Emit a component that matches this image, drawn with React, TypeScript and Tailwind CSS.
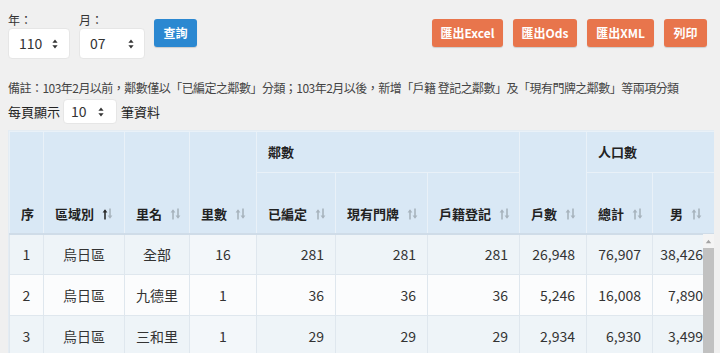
import React from "react";

const font = "font-['Noto_Sans_CJK_TC','Noto_Sans',sans-serif]";

function UpDown({ className = "" }: { className?: string }) {
  return (
    <svg width="6" height="10" viewBox="0 0 6 10" className={className}>
      <path d="M3 0.5 L5.6 3.8 L0.4 3.8 Z" fill="#333" />
      <path d="M3 9.5 L5.6 6.2 L0.4 6.2 Z" fill="#333" />
    </svg>
  );
}

function SortIcon({ active = false }: { active?: boolean }) {
  const up = active ? "#2b2b2b" : "#a7b3bd";
  const down = "#a7b3bd";
  return (
    <svg width="11" height="12" viewBox="0 0 11 12" className="ml-2 shrink-0">
      <path d="M3 2.5 L3 11.5" stroke={up} strokeWidth="1.6" />
      <path d="M0.6 4.6 L3 1.2 L5.4 4.6 Z" fill={up} />
      <path d="M8 0.5 L8 9.5" stroke={down} strokeWidth="1.6" />
      <path d="M5.6 7.4 L8 10.8 L10.4 7.4 Z" fill={down} />
    </svg>
  );
}

function FakeSelect({ value, w, h, pl, pr }: { value: string; w: string; h: string; pl: string; pr: string }) {
  return (
    <div
      className={`${w} ${h} ${pl} ${pr} flex items-center justify-between bg-white rounded-[4px] border border-[#e6e6e6] text-[14px] text-[#333]`}
    >
      <span>{value}</span>
      <UpDown />
    </div>
  );
}

const rows = [
  ["1", "烏日區", "全部", "16", "281", "281", "281", "26,948", "76,907", "38,426"],
  ["2", "烏日區", "九德里", "1", "36", "36", "36", "5,246", "16,008", "7,890"],
  ["3", "烏日區", "三和里", "1", "29", "29", "29", "2,934", "6,930", "3,499"],
];

export default function App() {
  const th = "border border-[#e9f1f8] align-bottom text-left font-bold text-[13px] text-[#222] pl-[11px] pb-[9px]";
  const td = "border border-[#dfe7ee] text-[14px] text-[#333] h-[41px]";
  return (
    <div className={`${font} bg-[#f0f0f0] w-[720px] h-[353px] overflow-hidden`}>
      <div className="pl-2 pr-[13px] pt-3 flex justify-between items-start">
        <div className="flex items-start">
          <div className="flex flex-col">
            <span className="text-[12px] leading-4 h-4 text-[#333]">年：</span>
            <FakeSelect value="110" w="w-[62px]" h="h-[31px]" pl="pl-[10px]" pr="pr-[11px]" />
          </div>
          <div className="flex flex-col ml-[9px]">
            <span className="text-[12px] leading-4 h-4 text-[#333]">月：</span>
            <FakeSelect value="07" w="w-[66px]" h="h-[31px]" pl="pl-[10px]" pr="pr-[10px]" />
          </div>
          <button className="ml-[9px] mt-[7px] w-[43px] h-[28px] rounded-[3px] bg-[#2b88d1] text-white text-[12px] font-bold shadow-[0_1px_1px_rgba(0,0,0,0.15)]">
            查詢
          </button>
        </div>
        <div className="flex items-start gap-[10px] mt-[7px]">
          {["匯出Excel", "匯出Ods", "匯出XML", "列印"].map((t, i) => (
            <button
              key={t}
              className={`${["w-[71px]", "w-[64px]", "w-[67px]", "w-[43px]"][i]} h-[28px] rounded-[3px] bg-[#e8754c] text-white text-[12px] font-bold shadow-[0_1px_1px_rgba(0,0,0,0.15)]`}
            >
              {t}
            </button>
          ))}
        </div>
      </div>

      <div className="pl-2 mt-[20px] text-[12px] leading-[18px] text-[#444] whitespace-nowrap tracking-[-0.53px]">
        備註：103年2月以前，鄰數僅以「已編定之鄰數」分類；103年2月以後，新增「戶籍 登記之鄰數」及「現有門牌之鄰數」等兩項分類
      </div>

      <div className="pl-2 mt-[2px] flex items-center text-[13px] text-[#222]">
        <span>每頁顯示</span>
        <div className="ml-[3px]">
          <FakeSelect value="10" w="w-[54px]" h="h-[25px]" pl="pl-[7px]" pr="pr-[12px]" />
        </div>
        <span className="ml-[4px]">筆資料</span>
      </div>

      <div className="ml-2 mt-[6px] w-[706px] relative overflow-hidden border-t border-l border-[#e4ecf3]">
        <table className="table-fixed border-collapse w-[705px]">
          <colgroup>
            <col className="w-[34px]" />
            <col className="w-[81px]" />
            <col className="w-[65px]" />
            <col className="w-[67px]" />
            <col className="w-[79px]" />
            <col className="w-[92px]" />
            <col className="w-[92px]" />
            <col className="w-[67px]" />
            <col className="w-[66px]" />
            <col className="w-[62px]" />
          </colgroup>
          <thead className="bg-[#d9e8f5] border-b-2 border-[#cfdce8]">
            <tr className="h-[41px]">
              <th rowSpan={2} className={`${th} pl-[10px]`}>序</th>
              <th rowSpan={2} className={th}>
                <div className="flex items-center">區域別<SortIcon active /></div>
              </th>
              <th rowSpan={2} className={`${th} pl-[9px]`}>
                <div className="flex items-center">里名<SortIcon /></div>
              </th>
              <th rowSpan={2} className={th}>
                <div className="flex items-center">里數<SortIcon /></div>
              </th>
              <th colSpan={3} className={`${th} pl-[10px] pb-[11px]`}>鄰數</th>
              <th rowSpan={2} className={th}>
                <div className="flex items-center">戶數<SortIcon /></div>
              </th>
              <th colSpan={2} className={`${th} pb-[11px]`}>人口數</th>
            </tr>
            <tr className="h-[61px]">
              <th className={th}>
                <div className="flex items-center">已編定<SortIcon /></div>
              </th>
              <th className={th}>
                <div className="flex items-center">現有門牌<SortIcon /></div>
              </th>
              <th className={th}>
                <div className="flex items-center">戶籍登記<SortIcon /></div>
              </th>
              <th className={th}>
                <div className="flex items-center">總計<SortIcon /></div>
              </th>
              <th className={`${th} pl-[17px]`}>
                <div className="flex items-center">男<SortIcon /></div>
              </th>
            </tr>
          </thead>
          <tbody>
            {rows.map((r, ri) => (
              <tr key={ri} className={ri % 2 === 0 ? "bg-[#eef4f8]" : "bg-[#fbfcfd]"}>
                {r.map((c, ci) => (
                  <td
                    key={ci}
                    className={`${td} ${ci < 4 ? "text-center" : "text-right pr-[11px]"} ${ri % 2 === 0 && ci === 3 ? "bg-[#f3f7fa]" : ""}`}
                  >
                    {c}
                  </td>
                ))}
              </tr>
            ))}
          </tbody>
        </table>
        <div className="absolute right-0 top-[103px] bottom-0 w-[11px] bg-[#f4f4f4] flex flex-col items-center">
          <svg width="7" height="5" viewBox="0 0 7 5" className="mt-[5px]">
            <path d="M3.5 0.8 L6.2 4.2 L0.8 4.2 Z" fill="#a3a3a3" />
          </svg>
          <div className="mt-[4px] w-[11px] flex-1 bg-[#c1c1c1]" />
        </div>
      </div>
    </div>
  );
}
